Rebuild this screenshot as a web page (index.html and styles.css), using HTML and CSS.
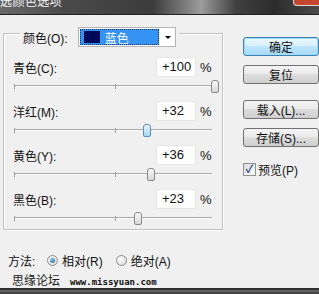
FILE: index.html
```html
<!DOCTYPE html>
<html lang="zh-CN">
<head>
    <meta charset="UTF-8">
    <title>可选颜色选项</title>
    <link rel="stylesheet" href="styles.css">
</head>
<body>
    <div class="titlebar">
        <span class="title">选颜色选项</span>
        <span class="close"></span>
    </div>

    <div class="main">
        <div class="group">
            <div class="head">
                <span>颜色(O):</span>
                <div class="combo">
                    <div class="sel"><span class="swatch"></span><span>蓝色</span></div>
                    <span class="arrow"></span>
                </div>
            </div>

            <div class="rows">
                <div class="row">
                    <div class="row-top"><span class="label">青色(C):</span><span class="value">+100</span><span class="pct">%</span></div>
                    <div class="slider"><span class="tick"></span><span class="thumb" style="left: 197px"></span></div>
                </div>
                <div class="row">
                    <div class="row-top"><span class="label">洋红(M):</span><span class="value">+32</span><span class="pct">%</span></div>
                    <div class="slider"><span class="tick"></span><span class="thumb active" style="left: 129px"></span></div>
                </div>
                <div class="row">
                    <div class="row-top"><span class="label">黄色(Y):</span><span class="value">+36</span><span class="pct">%</span></div>
                    <div class="slider"><span class="tick"></span><span class="thumb" style="left: 133px"></span></div>
                </div>
                <div class="row">
                    <div class="row-top"><span class="label">黑色(B):</span><span class="value">+23</span><span class="pct">%</span></div>
                    <div class="slider"><span class="tick"></span><span class="thumb" style="left: 120px"></span></div>
                </div>
            </div>
        </div>

        <div class="side">
            <button class="btn default">确定</button>
            <button class="btn">复位</button>
            <button class="btn gap">载入(L)...</button>
            <button class="btn">存储(S)...</button>
            <label class="check"><span class="box">&#10003;</span>预览(P)</label>
        </div>
    </div>

    <div class="method">
        <span class="method-label">方法:</span>
        <span class="radio on"></span><span>相对(R)</span>
        <span class="radio second"></span><span>绝对(A)</span>
    </div>

    <div class="footer">
        <span class="site">思缘论坛</span>
        <span class="url">www.missyuan.com</span>
    </div>

    <div class="bottombar"></div>
</body>
</html>
```

FILE: styles.css
```css
body {
    margin: 0;
    width: 319px;
    height: 294px;
    overflow: hidden;
    background: #f0f0f0;
    font: 12px "Liberation Sans", "Noto Sans CJK SC", sans-serif;
    color: #111;
    display: flex;
    flex-direction: column;
}
.titlebar {
    flex: none;
    height: 14px;
    border-bottom: 1px solid #222;
    display: flex;
    overflow: hidden;
    background: linear-gradient(to right, #6a6a6a 0, #4a4a4a 20%, #3c3c3c 48%, #9c9c9c 63%, #404040 74%, #2c2c2c 86%, #4a4a4a 100%);
}
.title {
    color: #f4f4f4;
    font-size: 12px;
    line-height: 12px;
    margin-top: -4px;
    letter-spacing: 0.4px;
}
.close {
    margin-left: auto;
    margin-right: -4px;
    width: 28px;
    height: 5px;
    background: #c4472f;
    border: 1px solid #e8d6d0;
    border-top: none;
    border-radius: 0 0 4px 4px;
}
.main {
    flex: none;
    display: flex;
    align-items: flex-start;
}
.group {
    margin: 18px 0 0 3px;
    width: 204px;
    border: 1px solid #c2c2c2;
    box-shadow: inset 1px 1px #fff, 1px 1px #fff;
    padding: 0 10px 5px 9px;
    display: flex;
    flex-direction: column;
}
.head {
    display: flex;
    align-items: center;
    align-self: flex-start;
    margin: -7px 0 0 7px;
    padding: 0 3px;
    background: #f0f0f0;
}
.combo {
    margin-left: 10px;
    width: 98px;
    height: 20px;
    box-sizing: border-box;
    border: 1px solid #b4b4b4;
    background: #fff;
    padding: 1px;
    display: flex;
    align-items: center;
}
.sel {
    width: 79px;
    height: 16px;
    background: #3593f3;
    color: #fff;
    display: flex;
    align-items: center;
    outline: 1px dotted #1a3a66;
    outline-offset: -1px;
}
.swatch {
    width: 16px;
    height: 12px;
    margin: 0 5px 0 4px;
    background: #000a5a;
}
.arrow {
    margin-left: 6px;
    border-left: 3px solid transparent;
    border-right: 3px solid transparent;
    border-top: 3px solid #000;
}
.rows {
    margin-top: 10px;
    display: flex;
    flex-direction: column;
    gap: 9px;
}
.row-top {
    display: flex;
    align-items: center;
    height: 20px;
}
.label {
    flex: 1;
}
.value {
    width: 40px;
    height: 20px;
    box-sizing: border-box;
    background: #fff;
    border: 1px solid #e6e6e6;
    padding-left: 5px;
    font-size: 13px;
    line-height: 18px;
}
.pct {
    margin-left: 4px;
    width: 12px;
    font-size: 13px;
}
.slider {
    position: relative;
    margin: 3px 0 0 1px;
    height: 12px;
}
.slider::before {
    content: "";
    position: absolute;
    left: 0;
    right: 0;
    top: 5px;
    border-top: 1px solid #a9a9a9;
    border-bottom: 1px solid #fff;
}
.slider::after,
.tick {
    content: "";
    position: absolute;
    top: 4px;
    width: 1px;
    height: 5px;
    background: #a0a0a0;
    left: 0;
}
.tick {
    left: 101px;
}
.thumb {
    position: absolute;
    top: 0;
    width: 6px;
    height: 11px;
    border: 1px solid #8a8a8a;
    border-radius: 3px 3px 2px 2px;
    background: linear-gradient(#fafafa, #d6d6d6);
}
.thumb.active {
    border-color: #5a8fb8;
    background: linear-gradient(#e8f5fd, #a9d6f2);
}
.side {
    margin: 22px 0 0 20px;
    display: flex;
    flex-direction: column;
    align-items: flex-start;
}
.btn {
    width: 76px;
    height: 19px;
    padding: 0;
    margin: 9px 0 0;
    font: 12px "Liberation Sans", "Noto Sans CJK SC", sans-serif;
    color: #111;
    border: 1px solid #707070;
    border-radius: 3px;
    background: linear-gradient(#f4f4f4 0, #ebebeb 45%, #dddddd 50%, #cfcfcf 100%);
}
.btn:first-child {
    margin-top: 0;
}
.btn.default {
    border-color: #3c7fb1;
    background: linear-gradient(#eaf6fd 0, #d9f0fc 45%, #bee6fd 50%, #a7d9f5 100%);
    box-shadow: inset 0 0 0 1px #9fdcf8;
}
.btn.gap {
    margin-top: 16px;
}
.check {
    margin-top: 16px;
    display: flex;
    align-items: center;
    height: 12px;
}
.box {
    width: 11px;
    height: 11px;
    margin-right: 2px;
    border: 1px solid #8e8f8f;
    background: linear-gradient(135deg, #dcdcdc, #fff);
    color: #2b4f8a;
    font-size: 11px;
    line-height: 11px;
    text-align: center;
    font-weight: bold;
}
.method {
    flex: none;
    margin-top: 23px;
    height: 14px;
    padding-left: 8px;
    display: flex;
    align-items: center;
}
.method-label {
    width: 39px;
}
.radio {
    width: 9px;
    height: 9px;
    margin-right: 4px;
    border: 1px solid #8e8f8f;
    border-radius: 50%;
    background: radial-gradient(circle at 40% 40%, #fff, #d4d4d4);
    position: relative;
}
.radio.on::after {
    content: "";
    position: absolute;
    left: 2px;
    top: 2px;
    width: 5px;
    height: 5px;
    border-radius: 50%;
    background: radial-gradient(circle at 40% 35%, #8ac7ec, #1d5a8c);
}
.radio.second {
    margin-left: 13px;
}
.footer {
    flex: none;
    margin-top: 4px;
    padding-left: 12px;
    display: flex;
    align-items: baseline;
}
.site {
    font-size: 12px;
    color: #222;
}
.url {
    margin-left: 10px;
    font: bold 9px "DejaVu Sans Mono", monospace;
    color: #111;
}
.bottombar {
    margin-top: auto;
    height: 5px;
    border-top: 2px solid #2e2e2e;
    background: linear-gradient(#6e6e6e, #3a3a3a);
}
```
